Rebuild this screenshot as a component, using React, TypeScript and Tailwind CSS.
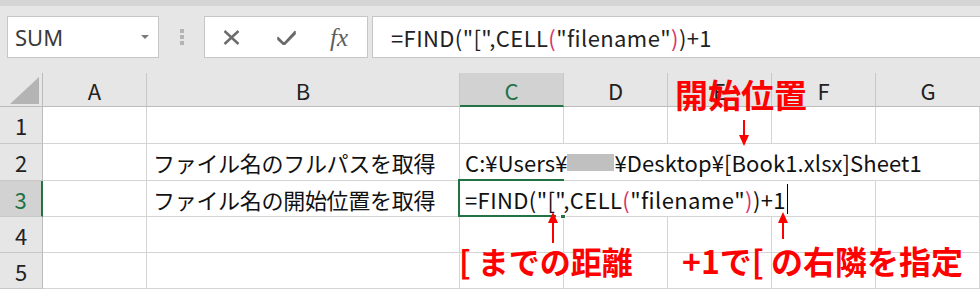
import React from "react";

const F = "font-['Noto_Sans_CJK_JP','Noto_Sans',sans-serif]";

function HeaderCell({ label, selected, last }: { label: string; selected?: boolean; last?: boolean }) {
  return (
    <div
      className={`flex items-center justify-center text-[22px] leading-none ${
        last ? "" : "border-r border-[#c8c8c8]"
      } ${selected ? "bg-[#d2d2d2] text-[#217346] border-b-2 border-b-[#217346]" : "border-b border-b-[#bcbcbc] text-[#222]"}`}
    >
      <span className="pt-[1px]">{label}</span>
    </div>
  );
}

function RowHead({ n, selected }: { n: number; selected?: boolean }) {
  return (
    <div
      className={`flex items-center justify-center text-[22px] leading-none border-b border-[#c8c8c8] ${
        selected ? "bg-[#d2d2d2] text-[#217346] border-r-2 border-r-[#217346]" : "border-r border-r-[#bcbcbc] text-[#222]"
      }`}
    >
      {n}
    </div>
  );
}

function Cell({ children, className = "" }: { children?: React.ReactNode; className?: string }) {
  return (
    <div className={`bg-white border-r border-b border-[#d4d4d4] flex items-center whitespace-nowrap text-[22px] leading-none text-[#111] ${className}`}>
      {children}
    </div>
  );
}

function Formula() {
  return (
    <span className="tracking-[0.4px]">
      =FIND("[",CELL<span className="text-[#d6336c]">(</span>"filename"<span className="text-[#d6336c]">)</span>)+1
    </span>
  );
}

export default function App() {
  const cols = ["A", "B", "C", "D", "E", "F", "G"];
  return (
    <div className={`relative w-[980px] h-[289px] overflow-hidden bg-[#e6e6e6] ${F}`}>
      <div className="h-[6px] bg-[#d5d5d5]" />
      {/* toolbar */}
      <div className="flex h-[42px] mt-[10px]">
        <div className="ml-[7px] w-[152px] bg-white border border-[#c6c6c6] flex items-center justify-between pl-[7px] pr-[9px]">
          <span className="font-['Noto_Sans',sans-serif] text-[22px] leading-none text-[#3a3a3a]">SUM</span>
          <svg width="8" height="4" viewBox="0 0 8 4">
            <path d="M0 0 L8 0 L4 4 Z" fill="#7a7a7a" />
          </svg>
        </div>
        <div className="w-[45px] flex flex-col items-center justify-center gap-[2px] pl-[1px]">
          <div className="w-[4px] h-[4px] bg-[#b4b4b4]" />
          <div className="w-[4px] h-[4px] bg-[#b4b4b4]" />
          <div className="w-[4px] h-[4px] bg-[#b4b4b4]" />
        </div>
        <div className="w-[164px] bg-white border border-[#c6c6c6] flex items-center">
          <div className="ml-[18px] w-[17px] h-[15px]">
            <svg width="17" height="15" viewBox="0 0 17 15">
              <path d="M1.5 1 L15.5 14 M15.5 1 L1.5 14" stroke="#6b6b6b" strokeWidth="2.4" fill="none" />
            </svg>
          </div>
          <div className="ml-[37px] w-[19px] h-[16px]">
            <svg width="19" height="16" viewBox="0 0 19 16">
              <path d="M1 8.5 L7 14.5 L18 2.5 L18 5 L7 16 L1 10.5 Z" fill="#6b6b6b" stroke="#6b6b6b" strokeWidth="1.6" strokeLinejoin="round" />
            </svg>
          </div>
          <span className="ml-[34px] font-['Liberation_Serif',serif] italic text-[25px] leading-none text-[#5e5e5e]">fx</span>
        </div>
        <div className="ml-[4px] flex-1 bg-white border border-r-0 border-[#c6c6c6] flex items-center pl-[18px] text-[22px] leading-none text-[#222] whitespace-nowrap">
          <Formula />
        </div>
      </div>
      <div className="h-[15px]" />
      {/* grid */}
      <div className="grid grid-cols-[43px_104px_313px_104px_104px_104px_104px_104px] grid-rows-[34px_37px_37px_36px_36px_36px]">
        <div className="border-r border-b border-[#bcbcbc] relative">
          <svg className="absolute left-[10px] top-[4px]" width="29" height="27" viewBox="0 0 29 27">
            <path d="M29 0 L29 27 L0 27 Z" fill="#b4b4b4" />
          </svg>
        </div>
        {cols.map((c, i) => (
          <HeaderCell key={c} label={c} selected={c === "C"} last={i === cols.length - 1} />
        ))}

        {/* row 1 */}
        <RowHead n={1} />
        <Cell /><Cell /><Cell /><Cell /><Cell /><Cell /><Cell />

        {/* row 2 */}
        <RowHead n={2} />
        <Cell />
        <Cell className="pl-[6px] tracking-[-0.3px]">ファイル名のフルパスを取得</Cell>
        <Cell className="col-span-5 pl-[5px] tracking-[0.1px]">
          <span>C:¥Users¥</span>
          <span className="inline-block w-[47px] h-[17px] bg-[#c0c0c0]" />
          <span>¥Desktop¥[Book1.xlsx]Sheet1</span>
        </Cell>

        {/* row 3 */}
        <RowHead n={3} selected />
        <Cell />
        <Cell className="pl-[6px] tracking-[-0.3px]">ファイル名の開始位置を取得</Cell>
        <Cell className="col-span-4 pl-[5px]">
          <Formula />
          <span className="inline-block w-[1px] h-[30px] bg-black ml-[1px]" />
        </Cell>
        <Cell />

        {/* row 4 */}
        <RowHead n={4} />
        <Cell /><Cell /><Cell /><Cell /><Cell /><Cell /><Cell />

        {/* row 5 */}
        <RowHead n={5} />
        <Cell /><Cell /><Cell /><Cell /><Cell /><Cell /><Cell />
      </div>

      {/* selection of C3 */}
      <div className="absolute left-[458px] top-[179px] w-[106px] h-[2px] bg-[#217346]" />
      <div className="absolute left-[458px] top-[179px] w-[2px] h-[38px] bg-[#217346]" />
      <div className="absolute left-[458px] top-[215px] w-[98px] h-[2px] bg-[#217346]" />
      <div className="absolute left-[560px] top-[214px] w-[6px] h-[5px] bg-[#217346] border border-white" />

      {/* annotations */}
      <div className="absolute left-[675px] top-[78px] text-[33px] font-bold leading-none text-[#ff0000]">開始位置</div>
      <svg className="absolute left-[738px] top-[120px]" width="12" height="26" viewBox="0 0 12 26">
        <path d="M6 0 L6 16" stroke="#ff0000" strokeWidth="2" />
        <path d="M1 15 L11 15 L6 26 Z" fill="#ff0000" />
      </svg>
      <svg className="absolute left-[547px] top-[212px]" width="12" height="31" viewBox="0 0 12 31">
        <path d="M6 10 L6 31" stroke="#ff0000" strokeWidth="2" />
        <path d="M1 11 L11 11 L6 0 Z" fill="#ff0000" />
      </svg>
      <svg className="absolute left-[777px] top-[212px]" width="12" height="27" viewBox="0 0 12 27">
        <path d="M6 10 L6 27" stroke="#ff0000" strokeWidth="2" />
        <path d="M1 11 L11 11 L6 0 Z" fill="#ff0000" />
      </svg>
      <div className="absolute left-[459px] top-[245px] text-[31px] font-bold leading-none text-[#ff0000] whitespace-nowrap">[ までの距離</div>
      <div className="absolute left-[682px] top-[244px] text-[32px] font-bold leading-none text-[#ff0000] whitespace-nowrap">+1で[ の右隣を指定</div>
    </div>
  );
}
